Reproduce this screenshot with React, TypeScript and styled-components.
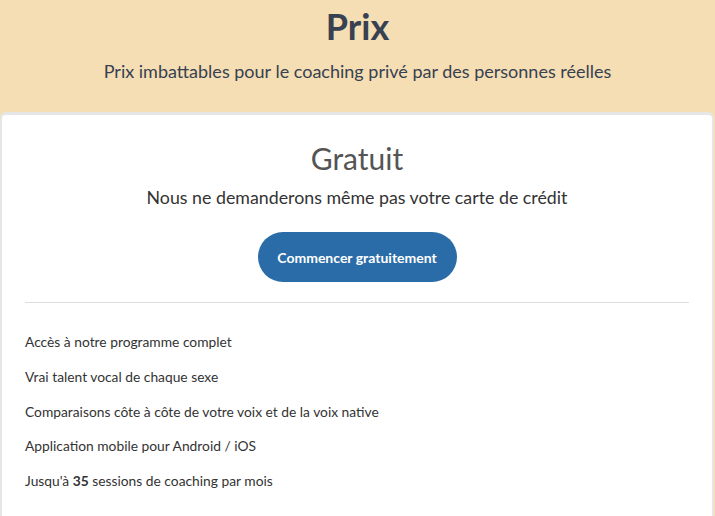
import styled, { createGlobalStyle } from "styled-components";

const GlobalStyle = createGlobalStyle`
  body {
    margin: 0;
    background: #ffffff;
    font-family: Lato, "Noto Sans", sans-serif;
  }
`;

const features = [
  { text: "Accès à notre programme complet" },
  { text: "Vrai talent vocal de chaque sexe" },
  { text: "Comparaisons côte à côte de votre voix et de la voix native" },
  { text: "Application mobile pour Android / iOS" },
  { before: "Jusqu'à ", bold: "35", text: " sessions de coaching par mois" },
];

export default function App() {
  return (
    <>
      <GlobalStyle />
      <Page>
        <Hero>
          <HeroTitle>Prix</HeroTitle>
          <HeroSubtitle>
            Prix imbattables pour le coaching privé par des personnes réelles
          </HeroSubtitle>
        </Hero>
        <PlanCard>
          <PlanHeader>
            <PlanName>Gratuit</PlanName>
            <PlanTagline>
              Nous ne demanderons même pas votre carte de crédit
            </PlanTagline>
            <StartButton>Commencer gratuitement</StartButton>
          </PlanHeader>
          <Divider />
          <FeatureList>
            {features.map((f, i) => (
              <FeatureItem key={i}>
                {f.before}
                {f.bold ? <strong>{f.bold}</strong> : null}
                {f.text}
              </FeatureItem>
            ))}
          </FeatureList>
        </PlanCard>
      </Page>
    </>
  );
}

const Page = styled.div`
  width: 100%;
  height: 516px;
  background: #f5deb3;
  overflow: hidden;
`;

const Hero = styled.header`
  display: flex;
  flex-direction: column;
  align-items: center;
  padding: 4px 16px 0;
  height: 108px;
  color: #374151;
`;

const HeroTitle = styled.h1`
  margin: 0;
  font-size: 36px;
  font-weight: 700;
  line-height: 44px;
`;

const HeroSubtitle = styled.p`
  margin: 11px 0 0;
  font-size: 18px;
  line-height: 24px;
`;

const PlanCard = styled.section`
  margin: 0 1px 0 0;
  background: #ffffff;
  border-top: 3px solid #e6e6e6;
  border-left: 2px solid #e6e6e6;
  border-right: 2px solid #e6e6e6;
  border-radius: 6px 6px 0 0;
  padding: 0 23px 0;
  height: 401px;
`;

const PlanHeader = styled.div`
  display: flex;
  flex-direction: column;
  align-items: center;
  padding-top: 25px;
`;

const PlanName = styled.h2`
  margin: 0;
  font-size: 30px;
  font-weight: 400;
  line-height: 36px;
  color: #555555;
`;

const PlanTagline = styled.p`
  margin: 8px 0 0;
  font-size: 17.8px;
  line-height: 26px;
  color: #333333;
`;

const StartButton = styled.button`
  margin-top: 22px;
  width: 199px;
  height: 50px;
  border: none;
  border-radius: 25px;
  background: #2a6ca8;
  color: #ffffff;
  font-family: inherit;
  font-size: 14px;
  font-weight: 700;
  cursor: pointer;
`;

const Divider = styled.hr`
  margin: 20px 0 0;
  border: none;
  border-top: 1px solid #dddddd;
`;

const FeatureList = styled.ul`
  list-style: none;
  margin: 0;
  padding: 29px 0 0;
  display: flex;
  flex-direction: column;
  gap: 14.8px;
`;

const FeatureItem = styled.li`
  font-size: 13.8px;
  line-height: 20px;
  color: #333333;

  strong {
    font-weight: 700;
  }
`;
